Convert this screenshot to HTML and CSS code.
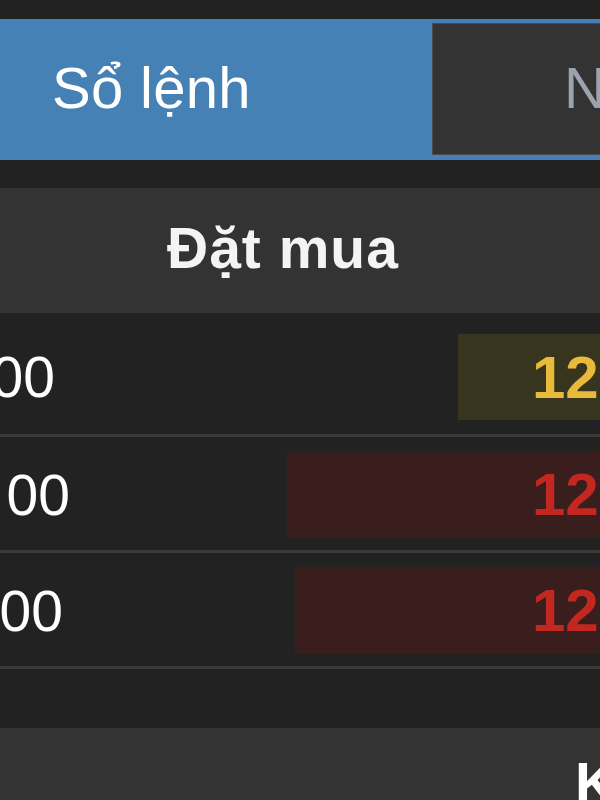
FILE: index.html
```html
<!DOCTYPE html>
<html lang="vi">
<head>
<meta charset="utf-8">
<title>Sổ lệnh</title>
<link rel="stylesheet" href="styles.css">
</head>
<body>
<div class="app">
  <div class="topband"></div>
  <div class="seg">
    <div class="seg-item seg-active">Sổ lệnh</div>
    <div class="seg-item seg-idle">Nhật ký</div>
  </div>
  <div class="gap"></div>
  <div class="head">Đặt mua</div>
  <div class="rows">
    <div class="row row-first">
      <div class="qty qty-a"><span>1.000</span></div>
      <div class="fill"></div>
      <div class="bar bar-ref" style="width:142px"><span>12 500</span></div>
    </div>
    <div class="row">
      <div class="qty qty-b"><span>2.000</span></div>
      <div class="fill"></div>
      <div class="bar bar-down bar-b" style="width:313px"><span>12 450</span></div>
    </div>
    <div class="row">
      <div class="qty qty-c"><span>1.000</span></div>
      <div class="fill"></div>
      <div class="bar bar-down bar-c" style="width:305px"><span>12 400</span></div>
    </div>
  </div>
  <div class="spacer"></div>
  <div class="foot">Khớp lệnh</div>
</div>
</body>
</html>
```
FILE: styles.css
```css
* { box-sizing: border-box; }
html, body {
  margin: 0;
  padding: 0;
  background: #222222;
}
body {
  width: 600px;
  height: 800px;
  overflow: hidden;
  font-family: "Liberation Sans", Arial, sans-serif;
  color: #ffffff;
}
.app {
  width: 600px;
  height: 800px;
  overflow: hidden;
  display: flex;
  flex-direction: column;
}
.topband {
  height: 19px;
  flex-shrink: 0;
  background: #222222;
}
.seg {
  height: 141px;
  flex-shrink: 0;
  background: #4581b4;
  display: flex;
  padding: 4px 0 5px 0;
}
.seg-item {
  flex-shrink: 0;
  display: flex;
  align-items: center;
  font-size: 58px;
  white-space: nowrap;
  letter-spacing: 0.3px;
}
.seg-active {
  width: 432px;
  padding-left: 52px;
  color: #ffffff;
  padding-bottom: 4px;
}
.seg-idle {
  width: 420px;
  padding-left: 131px;
  padding-bottom: 4px;
  background: #333333;
  border: 1px solid #4b4b4b;
  border-right: none;
  color: #9ba4ae;
}
.gap {
  height: 28px;
  flex-shrink: 0;
  background: #222222;
}
.head {
  height: 125px;
  flex-shrink: 0;
  background: #333333;
  display: flex;
  align-items: center;
  padding-left: 167px;
  padding-bottom: 6px;
  font-size: 57px;
  font-weight: bold;
  letter-spacing: 1px;
  color: #f4f4f4;
  white-space: nowrap;
}
.rows {
  display: flex;
  flex-direction: column;
  flex-shrink: 0;
}
.row {
  height: 116px;
  display: flex;
  align-items: stretch;
  padding: 14px 0 12px 0;
  border-bottom: 3px solid #3a3a3a;
  background: #222222;
}
.row-first {
  height: 124px;
  padding: 21px 0 14px 0;
}
.qty {
  flex-shrink: 0;
  display: flex;
  justify-content: flex-end;
  align-items: center;
  font-size: 57px;
  white-space: nowrap;
  color: #ffffff;
  overflow: hidden;
}
.qty-a { width: 55px; }
.qty-b { width: 65px; margin-left: 5px; }
.qty-c { width: 63px; }
.fill { flex: 1; }
.bar {
  flex-shrink: 0;
  display: flex;
  align-items: center;
  justify-content: flex-start;
  font-size: 60px;
  font-weight: bold;
  white-space: nowrap;
  overflow: hidden;
}
.bar-ref {
  background: #38351f;
  color: #e9b93b;
  padding-left: 74px;
}
.bar-down {
  background: #3a1e1e;
  color: #c2281f;
}
.bar-b { padding-left: 245px; }
.bar-c { padding-left: 237px; }
.bar span { display: block; }
.spacer {
  height: 59px;
  flex-shrink: 0;
  background: #222222;
}
.foot {
  height: 72px;
  flex-shrink: 0;
  background: #333333;
  padding-left: 575px;
  padding-top: 22px;
  font-size: 57px;
  font-weight: bold;
  white-space: nowrap;
  color: #ffffff;
  overflow: hidden;
}
```
